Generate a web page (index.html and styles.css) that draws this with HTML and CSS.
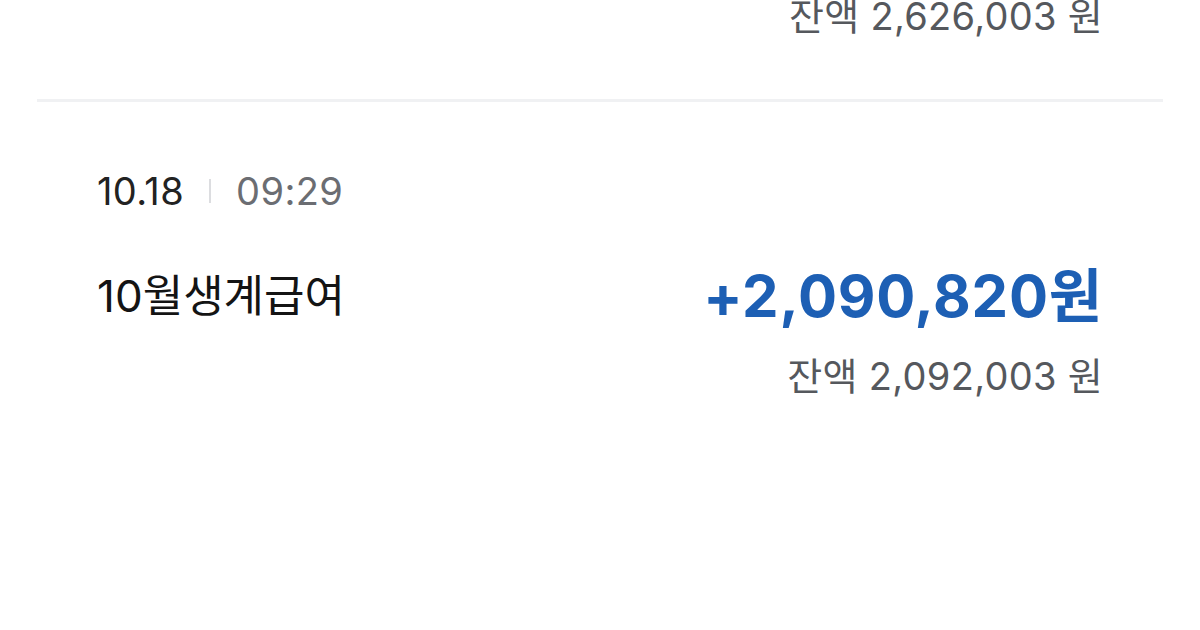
FILE: index.html
```html
<!DOCTYPE html>
<html lang="ko">
<head>
    <meta charset="UTF-8">
    <meta name="viewport" content="width=device-width, initial-scale=1.0">
    <title>거래내역</title>
    <link rel="stylesheet" href="styles.css">
</head>
<body>
    <div class="history">
        <div class="tx tx-cut">
            <div class="tx-balance">잔액 2,626,003 원</div>
        </div>

        <div class="divider"></div>

        <div class="tx">
            <div class="tx-date">
                <span class="day">10.18</span>
                <span class="bar"></span>
                <span class="time">09:29</span>
            </div>
            <div class="tx-main">
                <div class="tx-title">10월생계급여</div>
                <div class="tx-amount">+2,090,820원</div>
            </div>
            <div class="tx-balance">잔액 2,092,003 원</div>
        </div>
    </div>
</body>
</html>
```

FILE: styles.css
```css
* {
    margin: 0;
    padding: 0;
    box-sizing: border-box;
}

body {
    width: 1200px;
    height: 630px;
    overflow: hidden;
    background: #ffffff;
    font-family: Inter, "Noto Sans CJK KR", sans-serif;
    color: #1a1a1a;
}

.history {
    display: flex;
    flex-direction: column;
}

.tx {
    display: flex;
    flex-direction: column;
    padding: 0 97px;
}

.tx-cut {
    margin-top: -6px;
    padding-bottom: 61px;
}

.tx-cut .tx-balance {
    margin-top: 0;
}

.divider {
    height: 3px;
    background: #f0f1f3;
    margin: 0 37px;
}

.tx-date {
    display: flex;
    align-items: center;
    gap: 25px;
    margin-top: 67px;
    font-size: 38px;
    line-height: 44px;
    letter-spacing: 0.4px;
}

.tx-date .day {
    color: #222;
}

.tx-date .bar {
    width: 2px;
    height: 24px;
    background: #dcdde0;
}

.tx-date .time {
    color: #6b6d72;
}

.tx-main {
    display: flex;
    justify-content: space-between;
    align-items: center;
    margin-top: 51px;
    height: 64px;
}

.tx-title {
    font-size: 44px;
    line-height: 64px;
    color: #141414;
}

.tx-amount {
    font-size: 58px;
    line-height: 64px;
    font-weight: 700;
    letter-spacing: 0.8px;
    color: #1d5fb4;
}

.tx-balance {
    align-self: flex-end;
    margin-top: 26px;
    font-size: 38px;
    line-height: 44px;
    letter-spacing: 0.3px;
    color: #55585d;
}
```
